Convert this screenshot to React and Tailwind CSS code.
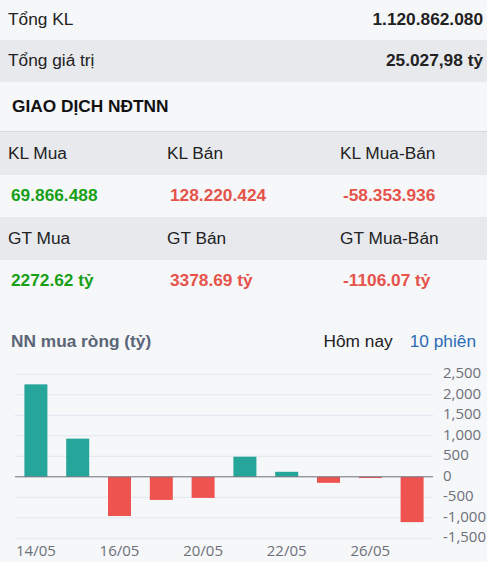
import React from "react";

const bars = [2255, 931, -956, -564, -515, 490, 122, -147, -30, -1106];
const yTicks = [2500, 2000, 1500, 1000, 500, 0, -500, -1000, -1500];
const xLabels = [
  { i: 0, t: "14/05" },
  { i: 2, t: "16/05" },
  { i: 4, t: "20/05" },
  { i: 6, t: "22/05" },
  { i: 8, t: "26/05" },
];

function Chart() {
  const top = 12.3;
  const step = 20.5;
  const left = 15;
  const right = 433;
  const band = (right - left) / 10;
  const zero = top + 5 * step;
  const yOf = (v) => zero - (v / 500) * step;
  return (
    <svg width="487" height="200" viewBox="0 0 487 200" className="block">
      {yTicks.map((v, k) => (
        <g key={v}>
          {v !== 0 && (
            <line x1={left} x2={right} y1={top + k * step} y2={top + k * step} stroke="#e0e6f1" strokeWidth="1" />
          )}
          <text
            x="443"
            y={top + k * step}
            dominantBaseline="middle"
            fill="#6e7079"
            fontSize="15"
            fontFamily="'Open Sans', sans-serif"
          >
            {v.toLocaleString("en-US")}
          </text>
        </g>
      ))}
      {bars.map((v, i) => {
        const cx = left + band * (i + 0.5);
        const y1 = yOf(Math.max(v, 0));
        const y2 = yOf(Math.min(v, 0));
        return (
          <rect
            key={i}
            x={cx - 11.5}
            y={y1}
            width="23"
            height={Math.max(y2 - y1, 1)}
            fill={v >= 0 ? "#26a69a" : "#ef5350"}
          />
        );
      })}
      <line x1={left} x2={right} y1={zero} y2={zero} stroke="#6e7079" strokeWidth="1" />
      {xLabels.map(({ i, t }) => (
        <text
          key={t}
          x={left + band * (i + 0.5)}
          y="190"
          textAnchor="middle"
          dominantBaseline="middle"
          fill="#6e7079"
          fontSize="15"
          fontFamily="'Open Sans', sans-serif"
        >
          {t}
        </text>
      ))}
    </svg>
  );
}

export default function App() {
  const green = "text-[#17a017]";
  const red = "text-[#e5534b]";
  return (
    <div className="w-[487px] h-[562px] overflow-hidden bg-[#f6f7f9] text-[#222] text-[17.3px] font-['Liberation_Sans',Arial,sans-serif]">
      <div className="h-[40px] flex items-center justify-between pl-[8px] pr-[4px]">
        <span>Tổng KL</span>
        <span className="font-bold">1.120.862.080</span>
      </div>
      <div className="h-[42px] flex items-center justify-between pl-[8px] pr-[4px] bg-[#e7e9ed]">
        <span>Tổng giá trị</span>
        <span className="font-bold">25.027,98 tỷ</span>
      </div>
      <div className="h-[49px] flex items-center pl-[12px] font-bold text-[#111]">GIAO DỊCH NĐTNN</div>
      <div className="border-t border-[#d5d8dd]">
        <div className="h-[43px] grid grid-cols-[159px_173px_1fr] items-center pl-[8px] bg-[#e7e9ed]">
          <span>KL Mua</span>
          <span>KL Bán</span>
          <span>KL Mua-Bán</span>
        </div>
        <div className="h-[42px] grid grid-cols-[159px_173px_1fr] items-center pl-[11px] font-bold">
          <span className={green}>69.866.488</span>
          <span className={red}>128.220.424</span>
          <span className={red}>-58.353.936</span>
        </div>
        <div className="h-[43px] grid grid-cols-[159px_173px_1fr] items-center pl-[8px] bg-[#e7e9ed]">
          <span>GT Mua</span>
          <span>GT Bán</span>
          <span>GT Mua-Bán</span>
        </div>
        <div className="h-[42px] grid grid-cols-[159px_173px_1fr] items-center pl-[11px] font-bold">
          <span className={green}>2272.62 tỷ</span>
          <span className={red}>3378.69 tỷ</span>
          <span className={red}>-1106.07 tỷ</span>
        </div>
      </div>
      <div className="h-[20px]" />
      <div className="h-[40px] flex items-center justify-between pl-[11px] pr-[11px]">
        <span className="font-bold text-[#5b6577]">NN mua ròng (tỷ)</span>
        <div className="flex items-center gap-[17px]">
          <span className="text-[#222]">Hôm nay</span>
          <span className="text-[#2d6cb5]">10 phiên</span>
        </div>
      </div>
      <Chart />
    </div>
  );
}
